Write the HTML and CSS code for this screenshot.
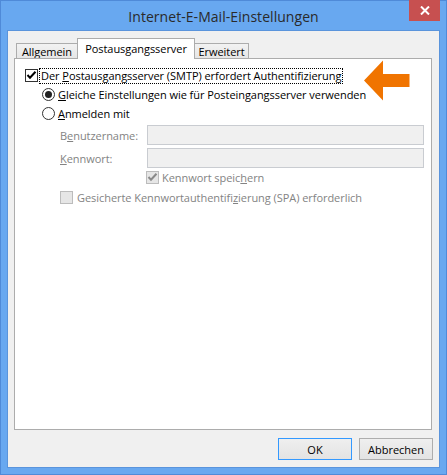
FILE: index.html
```html
<!DOCTYPE html>
<html>
<head>
<meta charset="utf-8">
<link rel="stylesheet" href="styles.css">
</head>
<body>
<div class="window">
  <div class="titlebar">
    <span class="title">Internet-E-Mail-Einstellungen</span>
    <div class="close">
      <svg width="10" height="9" viewBox="0 0 10 9"><path d="M1 0.5 L9 8.5 M9 0.5 L1 8.5" stroke="#fff" stroke-width="2"/></svg>
    </div>
  </div>
  <div class="client">
    <div class="tabs">
      <div class="tab tab-first">Allgemein</div>
      <div class="tab tab-active">Postausgangsserver</div>
      <div class="tab tab-last">Erweitert</div>
    </div>
    <div class="panel">
      <div class="row row-main">
        <svg class="box" width="13" height="13" viewBox="0 0 13 13"><rect x="0.5" y="0.5" width="12" height="12" fill="#fff" stroke="#333"/><path d="M2.5 6 L5 8.8 L10.5 2.8" fill="none" stroke="#000" stroke-width="2"/></svg>
        <span class="lbl focus">Der <u>P</u>ostausgangsserver (SMTP) erfordert Authentifizierung</span>
      </div>
      <div class="row row-radio">
        <svg class="box" width="13" height="13" viewBox="0 0 13 13"><circle cx="6.5" cy="6.5" r="6" fill="#fff" stroke="#333"/><circle cx="6.5" cy="6.5" r="3.5" fill="#222"/></svg>
        <span class="lbl"><u>G</u>leiche Einstellungen wie für Posteingangsserver verwenden</span>
      </div>
      <div class="row row-radio">
        <svg class="box" width="13" height="13" viewBox="0 0 13 13"><circle cx="6.5" cy="6.5" r="6" fill="#fff" stroke="#333"/></svg>
        <span class="lbl"><u>A</u>nmelden mit</span>
      </div>
      <div class="field-row">
        <span class="field-label">B<u>e</u>nutzername:</span>
        <div class="input"></div>
      </div>
      <div class="field-row">
        <span class="field-label"><u>K</u>ennwort:</span>
        <div class="input"></div>
      </div>
      <div class="row row-save">
        <svg class="box" width="13" height="13" viewBox="0 0 13 13"><rect x="0.5" y="0.5" width="12" height="12" fill="#e6e6e6" stroke="#bcbcbc"/><path d="M2.5 6 L5 8.8 L10.5 2.8" fill="none" stroke="#8a8a8a" stroke-width="2"/></svg>
        <span class="lbl disabled">Kennwort speic<u>h</u>ern</span>
      </div>
      <div class="row row-spa">
        <svg class="box" width="13" height="13" viewBox="0 0 13 13"><rect x="0.5" y="0.5" width="12" height="12" fill="#e6e6e6" stroke="#bcbcbc"/></svg>
        <span class="lbl disabled">Gesicherte Kennwortauthentifi<u>z</u>ierung (SPA) erforderlich</span>
      </div>
      <svg class="arrow" width="46" height="41" viewBox="0 0 46 41"><path d="M0 20.5 L19 0.5 L19 14 L45.5 14 L45.5 27 L19 27 L19 40.5 Z" fill="#f07400"/></svg>
    </div>
    <div class="buttons">
      <button class="btn btn-ok">OK</button>
      <button class="btn">Abbrechen</button>
    </div>
  </div>
</div>
</body>
</html>
```

FILE: styles.css
```css
html, body {
  margin: 0;
  padding: 0;
}
body {
  font-family: "Open Sans", "Noto Sans", sans-serif;
  font-size: 11px;
  letter-spacing: -0.05px;
  color: #000;
}
.window {
  width: 447px;
  height: 475px;
  box-sizing: border-box;
  background: #68a8f0;
  border: 1px solid #4f8ad8;
  display: flex;
  flex-direction: column;
}
.titlebar {
  height: 29px;
  position: relative;
  display: flex;
  align-items: center;
  justify-content: center;
}
.title {
  font-size: 14px;
  letter-spacing: 0.05px;
  color: #2a2a2a;
  margin-top: 2px;
}
.close {
  position: absolute;
  top: -1px;
  right: 6px;
  width: 31px;
  height: 21px;
  background: #c75050;
  display: flex;
  align-items: center;
  justify-content: center;
}
.client {
  margin: 0 6px 6px 6px;
  border: 1px solid #5a94dc;
  background: #f0f0f0;
  flex: 1;
  display: flex;
  flex-direction: column;
  padding: 7px 7px 7px 6px;
}
.tabs {
  display: flex;
  align-items: flex-start;
  padding-left: 2px;
  height: 20px;
}
.tab {
  box-sizing: border-box;
  height: 15px;
  margin-top: 5px;
  border-top: 1px solid #acacac;
  background: linear-gradient(#f2f2f2, #e6e6e6);
  display: flex;
  align-items: center;
  justify-content: center;
  padding-top: 1px;
}
.tab-first {
  width: 61px;
  border-left: 1px solid #acacac;
}
.tab-active {
  width: 118px;
  height: 21px;
  margin-top: 0;
  margin-bottom: -1px;
  border: 1px solid #acacac;
  border-bottom: none;
  background: #fff;
  position: relative;
  z-index: 1;
  padding-top: 0;
  padding-bottom: 2px;
}
.tab-last {
  width: 54px;
  border-right: 1px solid #acacac;
}
.panel {
  position: relative;
  height: 372px;
  box-sizing: border-box;
  border: 1px solid #acacac;
  background: #fff;
  padding-top: 7px;
  display: flex;
  flex-direction: column;
}
.row {
  height: 19px;
  display: flex;
  align-items: center;
}
.row-main { padding-left: 10px; }
.row-radio { padding-left: 27px; }
.row-save { padding-left: 131px; }
.row-spa { padding-left: 45px; margin-top: 1px; }
.box {
  flex: none;
  display: block;
}
.lbl {
  margin-left: 1px;
  border: 1px solid transparent;
  padding: 0 1px;
  line-height: 14px;
  white-space: nowrap;
}
.focus {
  border: 1px dotted #000;
}
.row-spa .lbl { padding-left: 2px; }
.disabled, .field-label {
  color: #838383;
}
u {
  text-decoration: underline;
  text-underline-offset: 1px;
}
.field-row {
  display: flex;
  align-items: center;
  height: 20px;
  margin-top: 2px;
  padding-left: 45px;
}
.field-row + .field-row {
  margin-top: 3px;
}
.field-label {
  width: 87px;
  flex: none;
}
.input {
  width: 277px;
  height: 20px;
  box-sizing: border-box;
  border: 1px solid #c9ccd1;
  background: #f0f0f0;
}
.arrow {
  position: absolute;
  left: 349px;
  top: 1px;
}
.buttons {
  display: flex;
  justify-content: flex-end;
  gap: 7px;
  margin-top: 8px;
  margin-right: -1px;
}
.btn {
  width: 74px;
  height: 22px;
  box-sizing: border-box;
  border: 1px solid #adadad;
  background: linear-gradient(#efefef, #e3e3e3);
  font-family: inherit;
  font-size: 11px;
  color: #000;
  padding: 0;
  margin: 0;
}
.btn-ok {
  border-color: #3399ff;
}
```
